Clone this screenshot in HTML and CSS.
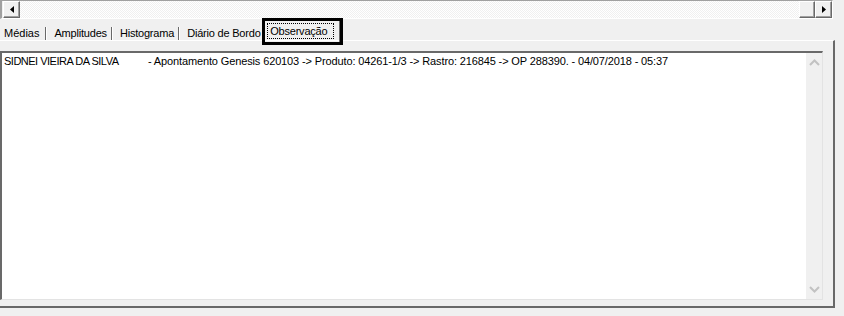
FILE: index.html
```html
<!DOCTYPE html>
<html>
<head>
<meta charset="utf-8">
<link rel="stylesheet" href="styles.css">
</head>
<body>
<div class="page">
  <div class="hscroll">
    <div class="sbtn">
      <svg width="4" height="7" viewBox="0 0 4 7"><path d="M4 0 L0 3.5 L4 7 Z" fill="#000"/></svg>
    </div>
    <div class="track"></div>
    <div class="sbtn thumb"></div>
    <div class="sbtn">
      <svg width="4" height="7" viewBox="0 0 4 7"><path d="M0 0 L4 3.5 L0 7 Z" fill="#000"/></svg>
    </div>
  </div>
  <div class="tabs">
    <div class="tab first">Médias</div>
    <div class="tab">Amplitudes</div>
    <div class="tab">Histograma</div>
    <div class="tab last">Diário de Bordo</div>
    <div class="tab active"><span class="focus">Observação</span></div>
  </div>
  <div class="panel">
    <div class="memo">
      <div class="text"><span class="name">SIDNEI VIEIRA DA SILVA</span><span class="rest">- Apontamento Genesis 620103 -&gt; Produto: 04261-1/3 -&gt; Rastro: 216845 -&gt; OP 288390. - 04/07/2018 - 05:37</span></div>
      <div class="vscroll">
        <svg width="11" height="7" viewBox="0 0 11 7"><path d="M1 6 L5.5 1.5 L10 6" fill="none" stroke="#c2c2c2" stroke-width="2"/></svg>
        <svg width="11" height="7" viewBox="0 0 11 7"><path d="M1 1 L5.5 5.5 L10 1" fill="none" stroke="#c2c2c2" stroke-width="2"/></svg>
      </div>
    </div>
  </div>
</div>
</body>
</html>
```
FILE: styles.css
```css
html, body {
  margin: 0;
  padding: 0;
  background: #f0f0f0;
}
body {
  font-family: "Liberation Sans", Arial, sans-serif;
  font-size: 11px;
  color: #000;
}
.page {
  width: 844px;
  height: 316px;
  overflow: hidden;
}
.hscroll {
  width: 829px;
  height: 17px;
  display: flex;
  border-top: 1px solid #a0a0a0;
  border-left: 2px solid #a0a0a0;
  border-right: 1px solid #fff;
  border-bottom: 1px solid #fff;
  padding-left: 1px;
  background: #f0f0f0;
}
.sbtn {
  width: 13px;
  height: 13px;
  flex: none;
  background: #f0f0f0;
  border-top: 1px solid #fff;
  border-left: 1px solid #fff;
  border-right: 1px solid #696969;
  border-bottom: 1px solid #696969;
  box-shadow: inset -1px -1px 0 #a0a0a0;
  padding: 1px;
  display: flex;
  align-items: center;
  justify-content: center;
}
.thumb {
  width: 12px;
}
.track {
  flex: 1;
  background-color: #fbfbfb;
  background-image: repeating-conic-gradient(#f0f0f0 0 25%, #ffffff 0 50%);
  background-size: 2px 2px;
}
.tabs {
  display: flex;
  align-items: flex-end;
  height: 21px;
  padding-left: 4px;
  letter-spacing: -0.2px;
  white-space: nowrap;
}
.tab {
  flex: none;
  height: 13px;
  line-height: 13px;
  padding-right: 4px;
  border-right: 1px solid #696969;
  box-shadow: 1px 0 0 #fff;
  margin-right: 8px;
}
.tab.first {
  letter-spacing: 0;
  padding-right: 6px;
}
.tab.last {
  border-right-color: transparent;
  box-shadow: none;
  margin-right: 0;
  padding-right: 0;
  width: 73px;
}
.tab.active {
  outline: 3px solid #000;
  height: 21px;
  width: 75px;
  margin-left: 4px;
  margin-right: 0;
  margin-bottom: -2px;
  padding: 2px 0 0 2px;
  box-sizing: border-box;
  border-right: 1px solid #696969;
  box-shadow: none;
  position: relative;
}
.focus {
  display: block;
  border: 1px dotted #000;
  width: 67px;
  height: 16px;
  box-sizing: border-box;
  line-height: 14px;
  padding-left: 2px;
}
.panel {
  width: 835px;
  height: 268px;
  border-top: 1px solid #fff;
  border-right: 2px solid #696969;
  border-bottom: 2px solid #696969;
  padding-top: 10px;
  box-sizing: border-box;
}
.memo {
  width: 823px;
  height: 249px;
  box-sizing: border-box;
  background: #fff;
  border-top: 2px solid #696969;
  border-left: 2px solid #696969;
  border-right: 1px solid #e3e3e3;
  border-bottom: 1px solid #e3e3e3;
  display: flex;
}
.text {
  flex: 1;
  padding: 2px 0 0 2px;
  white-space: nowrap;
  line-height: 13px;
}
.name {
  display: inline-block;
  width: 144px;
  letter-spacing: -0.5px;
}
.rest {
  letter-spacing: -0.13px;
}
.vscroll {
  width: 16px;
  background: #f0f0f0;
  display: flex;
  flex-direction: column;
  justify-content: space-between;
  align-items: center;
  padding: 6px 0 6px;
  box-sizing: border-box;
}
```
